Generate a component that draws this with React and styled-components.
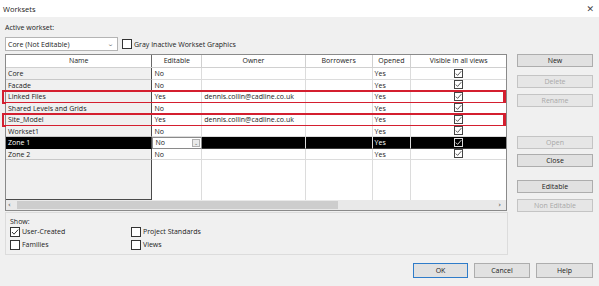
import React from "react";
import styled, { createGlobalStyle } from "styled-components";

const GlobalStyle = createGlobalStyle`
  html, body { margin: 0; padding: 0; background: #f0f0f0; }
  body { font-family: "Open Sans", "Noto Sans", sans-serif; color: #1a1a1a; }
  * { box-sizing: border-box; }
`;

const columns = [
  { key: "name", label: "Name", w: 147 },
  { key: "editable", label: "Editable", w: 50 },
  { key: "owner", label: "Owner", w: 104 },
  { key: "borrowers", label: "Borrowers", w: 67 },
  { key: "opened", label: "Opened", w: 39 },
  { key: "visible", label: "Visible in all views", w: 95 },
];

const rows = [
  { name: "Core", editable: "No", owner: "" },
  { name: "Facade", editable: "No", owner: "" },
  { name: "Linked Files", editable: "Yes", owner: "dennis.collin@cadline.co.uk", marked: true },
  { name: "Shared Levels and Grids", editable: "No", owner: "" },
  { name: "Site_Model", editable: "Yes", owner: "dennis.collin@cadline.co.uk", marked: true },
  { name: "Workset1", editable: "No", owner: "" },
  { name: "Zone 1", editable: "No", owner: "", selected: true },
  { name: "Zone 2", editable: "No", owner: "" },
];

const Window = styled.div`
  width: 599px;
  height: 286px;
  background: #f0f0f0;
  display: flex;
  flex-direction: column;
  font-size: 7px;
  overflow: hidden;
`;

const TitleBar = styled.div`
  height: 17px;
  background: #ffffff;
  display: flex;
  align-items: center;
  justify-content: space-between;
  padding: 0 5px 0 3px;
  font-size: 7.5px;
  color: #222;
`;

const CloseX = styled.span`
  font-size: 9px;
  color: #444;
  font-family: "DejaVu Sans", sans-serif;
`;

const Body = styled.div`
  flex: 1;
  padding: 5px 6px 0 5px;
  display: flex;
  flex-direction: column;
`;

const Label = styled.div`
  height: 10px;
  line-height: 10px;
  margin-top: 1px;
`;

const TopRow = styled.div`
  display: flex;
  align-items: center;
  margin-top: 4px;
  height: 14px;
`;

const Combo = styled.div`
  width: 113px;
  height: 14px;
  background: #fff;
  border: 1px solid #b4b4b4;
  display: flex;
  align-items: center;
  justify-content: space-between;
  padding: 0 4px 0 2px;
`;

const Chevron = styled.span`
  color: #777;
  font-size: 6px;
  transform: scaleX(1.4);
`;

const CheckLabel = styled.label`
  display: flex;
  align-items: center;
  gap: 2px;
  margin-left: ${(p) => p.$ml || 0}px;
  height: 12px;
`;

const Main = styled.div`
  display: flex;
  margin-top: 3px;
  gap: 10px;
`;

const Left = styled.div`
  width: 502px;
  display: flex;
  flex-direction: column;
`;

const Table = styled.div`
  width: 502px;
  border: 1px solid #8a8a8a;
  background: #fff;
  display: flex;
  flex-direction: column;
`;

const HeaderRow = styled.div`
  display: flex;
  height: 13px;
  border-bottom: 1px solid #d0d0d0;
`;

const HeaderCell = styled.div`
  width: ${(p) => p.$w}px;
  text-align: center;
  line-height: 11px;
  border-right: 1px solid ${(p) => (p.$first ? "#6a6a6a" : "#d0d0d0")};
  &:last-child { border-right: none; }
`;

const RowWrap = styled.div`
  position: relative;
  display: flex;
  height: 11.5px;
  background: ${(p) => (p.$selected ? "#000" : "#fff")};
  color: ${(p) => (p.$selected ? "#fff" : "#1a1a1a")};
  ${(p) =>
    p.$marked &&
    `&::after {
      content: "";
      position: absolute;
      left: -4px;
      right: 0px;
      top: -1px;
      bottom: -1px;
      border: 2px solid #d41f2f;
      border-right-width: 3px;
      pointer-events: none;
    }`}
`;

const Cell = styled.div`
  width: ${(p) => p.$w}px;
  line-height: 11px;
  padding-left: 2px;
  white-space: nowrap;
  overflow: hidden;
  border-bottom: 1px solid ${(p) => (p.$dark ? "#3a3a3a" : "#dcdcdc")};
  border-right: 1px solid #dcdcdc;
  &:last-child { border-right: none; }
`;

const NameCell = styled(Cell)`
  background: ${(p) => (p.$dark ? "#000" : "#f0f0f0")};
  color: ${(p) => (p.$dark ? "#fff" : "#1a1a1a")};
  border-right: 1px solid #4a4a4a;
  border-bottom: 1px solid ${(p) => (p.$dark ? "#000" : "#c8c8c8")};
`;

const CenterCell = styled(Cell)`
  display: flex;
  align-items: center;
  justify-content: center;
  padding-left: 0;
`;

const EditCombo = styled(Cell)`
  background: #fff;
  color: #1a1a1a;
  display: flex;
  justify-content: space-between;
  align-items: center;
  padding-right: 1px;
  border: 1px solid #8a8a8a;
`;

const MiniDrop = styled.span`
  width: 8px;
  height: 8px;
  border: 1px solid #b0b0b0;
  background: #eaeaea;
  font-size: 5px;
  color: #555;
  line-height: 6px;
  text-align: center;
`;

const Filler = styled.div`
  display: flex;
  height: 40px;
`;

const FillName = styled.div`
  width: ${(p) => p.$w}px;
  background: #f0f0f0;
  border-right: 1px solid #4a4a4a;
  border-bottom: 1px solid #4a4a4a;
`;

const FillCol = styled.div`
  width: ${(p) => p.$w}px;
  border-right: 1px solid #dcdcdc;
  &:last-child { border-right: none; }
`;

const HScroll = styled.div`
  height: 10px;
  background: #e9e9e9;
  display: flex;
  align-items: center;
  padding: 0 5px 0 2px;
  color: #444;
  font-size: 8px;
`;

const Thumb = styled.div`
  width: 321px;
  height: 8px;
  background: #cdcdcd;
  margin-left: 6px;
`;

const Arrow = styled.span`
  font-family: "DejaVu Sans", sans-serif;
  font-size: 7px;
  line-height: 8px;
  margin-left: ${(p) => (p.$push ? "auto" : 0)};
`;

const ShowGroup = styled.fieldset`
  margin: 1px 0 0 0;
  width: 503px;
  height: 43px;
  border: 1px solid #dcdcdc;
  padding: 4px 4px 0 4px;
  display: grid;
  grid-template-columns: 121px auto;
  grid-template-rows: 8px 13px 13px;
  align-items: center;
  min-inline-size: 0;
`;

const ShowLabel = styled.div`
  grid-column: 1 / 3;
  line-height: 8px;
  margin-top: 2px;
`;

const Right = styled.div`
  width: 76px;
  display: flex;
  flex-direction: column;
`;

const Button = styled.div`
  height: ${(p) => p.$h || 13}px;
  width: ${(p) => (p.$w ? `${p.$w}px` : "100%")};
  margin-top: ${(p) => p.$mt || 0}px;
  background: ${(p) => (p.$disabled ? "#e6e6e6" : "#e1e1e1")};
  border: 1px solid ${(p) => (p.$primary ? "#2f7cc9" : p.$disabled ? "#c4c4c4" : "#adadad")};
  color: ${(p) => (p.$disabled ? "#a8a8a8" : "#1a1a1a")};
  display: flex;
  align-items: center;
  justify-content: center;
  flex-shrink: 0;
`;

const Footer = styled.div`
  display: flex;
  justify-content: flex-end;
  gap: 6px;
  margin-top: 8px;
`;

const Check = ({ checked, light }) => (
  <svg width="9" height="9" viewBox="0 0 9 9">
    <rect
      x="0.5"
      y="0.5"
      width="8"
      height="8"
      fill={light ? "#000" : "#fff"}
      stroke={light ? "#ddd" : "#444"}
    />
    {checked && (
      <path
        d="M1.8 4.6 L3.6 6.4 L7.3 2.2"
        fill="none"
        stroke={light ? "#eee" : "#444"}
        strokeWidth="0.9"
      />
    )}
  </svg>
);

const BigCheck = ({ checked }) => (
  <svg width="10" height="10" viewBox="0 0 10 10">
    <rect x="0.5" y="0.5" width="9" height="9" fill="#fff" stroke="#333" />
    {checked && (
      <path d="M2 5 L4 7.2 L8.2 2.6" fill="none" stroke="#333" strokeWidth="1" />
    )}
  </svg>
);

const Row = ({ row }) => {
  const sel = row.selected;
  return (
    <RowWrap $selected={sel} $marked={row.marked}>
      <NameCell $w={columns[0].w} $dark={sel}>
        {row.name}
      </NameCell>
      {sel ? (
        <EditCombo $w={columns[1].w}>
          {row.editable}
          <MiniDrop>&#8964;</MiniDrop>
        </EditCombo>
      ) : (
        <Cell $w={columns[1].w}>{row.editable}</Cell>
      )}
      <Cell $w={columns[2].w} $dark={sel}>
        {row.owner}
      </Cell>
      <Cell $w={columns[3].w} $dark={sel} />
      <Cell $w={columns[4].w} $dark={sel}>
        Yes
      </Cell>
      <CenterCell $w={columns[5].w} $dark={sel}>
        <Check checked light={sel} />
      </CenterCell>
    </RowWrap>
  );
};

const App = () => {
  return (
    <>
      <GlobalStyle />
      <Window>
        <TitleBar>
          <span>Worksets</span>
          <CloseX>✕</CloseX>
        </TitleBar>
        <Body>
          <Label>Active workset:</Label>
          <TopRow>
            <Combo>
              <span>Core (Not Editable)</span>
              <Chevron>&#8964;</Chevron>
            </Combo>
            <CheckLabel $ml={4}>
              <BigCheck />
              Gray Inactive Workset Graphics
            </CheckLabel>
          </TopRow>
          <Main>
            <Left>
              <Table>
                <HeaderRow>
                  {columns.map((c, i) => (
                    <HeaderCell key={c.key} $w={c.w} $first={i === 0}>
                      {c.label}
                    </HeaderCell>
                  ))}
                </HeaderRow>
                {rows.map((r) => (
                  <Row key={r.name} row={r} />
                ))}
                <Filler>
                  <FillName $w={columns[0].w} />
                  {columns.slice(1).map((c) => (
                    <FillCol key={c.key} $w={c.w} />
                  ))}
                </Filler>
                <HScroll>
                  <Arrow>‹</Arrow>
                  <Thumb />
                  <Arrow $push>›</Arrow>
                </HScroll>
              </Table>
              <ShowGroup>
                <ShowLabel>Show:</ShowLabel>
                <CheckLabel>
                  <BigCheck checked />
                  User-Created
                </CheckLabel>
                <CheckLabel>
                  <BigCheck />
                  Project Standards
                </CheckLabel>
                <CheckLabel>
                  <BigCheck />
                  Families
                </CheckLabel>
                <CheckLabel>
                  <BigCheck />
                  Views
                </CheckLabel>
              </ShowGroup>
            </Left>
            <Right>
              <Button $mt={0}>New</Button>
              <Button $mt={8} $disabled>
                Delete
              </Button>
              <Button $mt={6} $disabled>
                Rename
              </Button>
              <Button $mt={29} $disabled>
                Open
              </Button>
              <Button $mt={5}>Close</Button>
              <Button $mt={13}>Editable</Button>
              <Button $mt={6} $disabled>
                Non Editable
              </Button>
            </Right>
          </Main>
          <Footer>
            <Button $w={55} $h={15} $primary>
              OK
            </Button>
            <Button $w={56} $h={15}>
              Cancel
            </Button>
            <Button $w={57} $h={15}>
              Help
            </Button>
          </Footer>
        </Body>
      </Window>
    </>
  );
};

export default App;
